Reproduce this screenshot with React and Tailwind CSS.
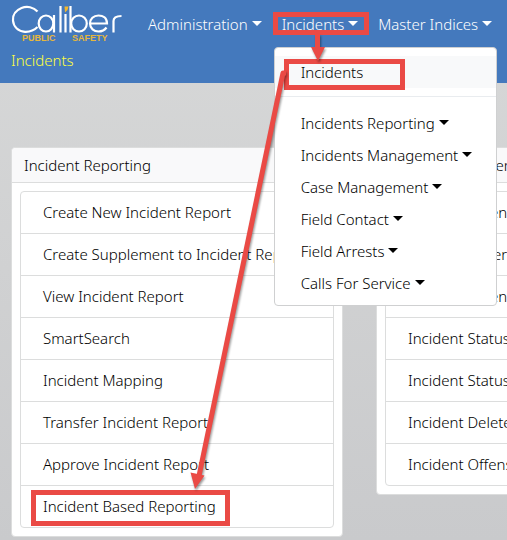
import React from "react";

const navItems = [
  { label: "Administration" },
  { label: "Incidents", open: true },
  { label: "Master Indices" },
];

const menuItems = [
  "Incidents Reporting",
  "Incidents Management",
  "Case Management",
  "Field Contact",
  "Field Arrests",
  "Calls For Service",
];

const reportingLinks = [
  "Create New Incident Report",
  "Create Supplement to Incident Report",
  "View Incident Report",
  "SmartSearch",
  "Incident Mapping",
  "Transfer Incident Report",
  "Approve Incident Report",
  "Incident Based Reporting",
];

const managementLinks = [
  "Incident Parent",
  "Incident Other",
  "Incident Parent",
  "Incident Status",
  "Incident Status History",
  "Incident Delete",
  "Incident Offenses",
];

function Caret() {
  return (
    <span className="mb-0.5 border-x-[5px] border-t-[5px] border-x-transparent border-t-current" />
  );
}

function Logo() {
  return (
    <svg
      className="h-10 w-[112px] shrink-0"
      viewBox="11 4 112 40"
      fill="none"
      role="img"
      aria-label="Caliber Public Safety"
    >
      <g stroke="#fff" strokeWidth="2.2">
        <path d="M37.500 11.500C33.500 7 27 5.800 21.500 8C15.500 10.500 12.500 15 13 20.500C13.500 27 18.500 31.500 25 31.800C30 32 34 30.500 37.500 27" />
        <ellipse cx="46" cy="23.500" rx="7.300" ry="8" />
        <path d="M54 15V32.500M60.500 6V32.500M65.500 14V32.500M70.500 6V32.500" />
        <ellipse cx="79" cy="23.500" rx="7.800" ry="8" />
        <path d="M90 23.500H107C107 18 103 15.500 98.500 15.500C93.500 15.500 90 19 90 23.500C90 28.500 94 31.500 98.500 31.500C102 31.500 104.500 30.300 106.500 27.500" />
        <path d="M113.500 32.500V21C113.500 17.500 116 16 121.500 16" />
      </g>
      <path d="M64.500 6.500h4l-1 3.500-2.500 2.500z" fill="#f3b72c" />
      <g
        fill="#e6b73c"
        fontFamily="Liberation Sans, sans-serif"
        fontSize="9"
        fontWeight="bold"
      >
        <text x="22" y="41">PUBLIC</text>
        <text x="72" y="41">SAFETY</text>
      </g>
    </svg>
  );
}

function LinkCard({ title, links }) {
  return (
    <section className="w-[332px] shrink-0 rounded border border-[#dcdddd] bg-white">
      <h2 className="rounded-t border-b border-[#dcdddd] bg-[#f9f9fa] px-3 py-1 leading-[26px]">
        {title}
      </h2>
      <ul className="m-2 rounded border border-[#dcdddd]">
        {links.map((label, i) => (
          <li
            key={i}
            className="border-b border-[#dcdddd] px-[22px] py-2 leading-[25px] whitespace-nowrap last:border-b-0"
          >
            <a href="#">{label}</a>
          </li>
        ))}
      </ul>
    </section>
  );
}

function IncidentsMenu() {
  return (
    <div className="absolute top-[35px] -left-2 z-10 w-[223px] rounded border border-[#cfd0d1] bg-white pt-2 pb-1.5 text-black">
      <a href="#" className="block bg-[#f8f9fa] px-[26px] leading-8">
        Incidents
      </a>
      <hr className="mt-2 mb-2.5 border-[#e9ecef]" />
      {menuItems.map((label) => (
        <button
          key={label}
          className="flex h-8 w-full items-center gap-1 px-[26px] text-left whitespace-nowrap"
        >
          {label}
          <Caret />
        </button>
      ))}
    </div>
  );
}

function Header() {
  return (
    <header className="h-[83px] bg-[#4479bd] pl-[11px] text-white">
      <div className="flex items-start pt-1">
        <Logo />
        <nav className="mt-2 ml-[25px] flex gap-5">
          {navItems.map(({ label, open }) => (
            <div key={label} className="relative">
              <button className="flex h-6 items-center gap-1 whitespace-nowrap">
                {label}
                <Caret />
              </button>
              {open && <IncidentsMenu />}
            </div>
          ))}
        </nav>
      </div>
      <h1 className="leading-8 text-[#ffff3c]">Incidents</h1>
    </header>
  );
}

// Red boxes and arrows that walk through the menu path
function Callouts() {
  return (
    <svg
      className="pointer-events-none absolute top-0 left-0 z-20 h-[540px] w-[507px]"
      viewBox="0 0 507 540"
      fill="none"
      aria-hidden="true"
    >
      <g stroke="#ea4a45" strokeWidth="5">
        <rect x="275.500" y="14.500" width="91" height="18" />
        <rect x="286.500" y="61.500" width="116" height="26" />
        <rect x="33.500" y="492.500" width="194" height="31" />
      </g>
      <g className="drop-shadow-[1px_2px_1px_rgba(0,0,0,0.4)]">
        <path
          d="M317.500 34V50M286 73H283L199 476"
          stroke="#ea4a45"
          strokeWidth="5"
          strokeLinejoin="round"
        />
        <path d="M311 47H325L318 61ZM190.500 472.500L204.500 475.500L195 489Z" fill="#ea4a45" />
      </g>
    </svg>
  );
}

function App() {
  return (
    <div className="relative min-h-screen overflow-hidden bg-linear-to-b from-[#d7d8d8] to-[#c9cacc] font-['Noto_Sans',sans-serif] text-[15px] font-light text-black">
      <Header />
      <main className="flex items-start gap-[33px] px-[11px] pt-16">
        <LinkCard title="Incident Reporting" links={reportingLinks} />
        <LinkCard title="Incident Management" links={managementLinks} />
      </main>
      <Callouts />
    </div>
  );
}

export default App;
